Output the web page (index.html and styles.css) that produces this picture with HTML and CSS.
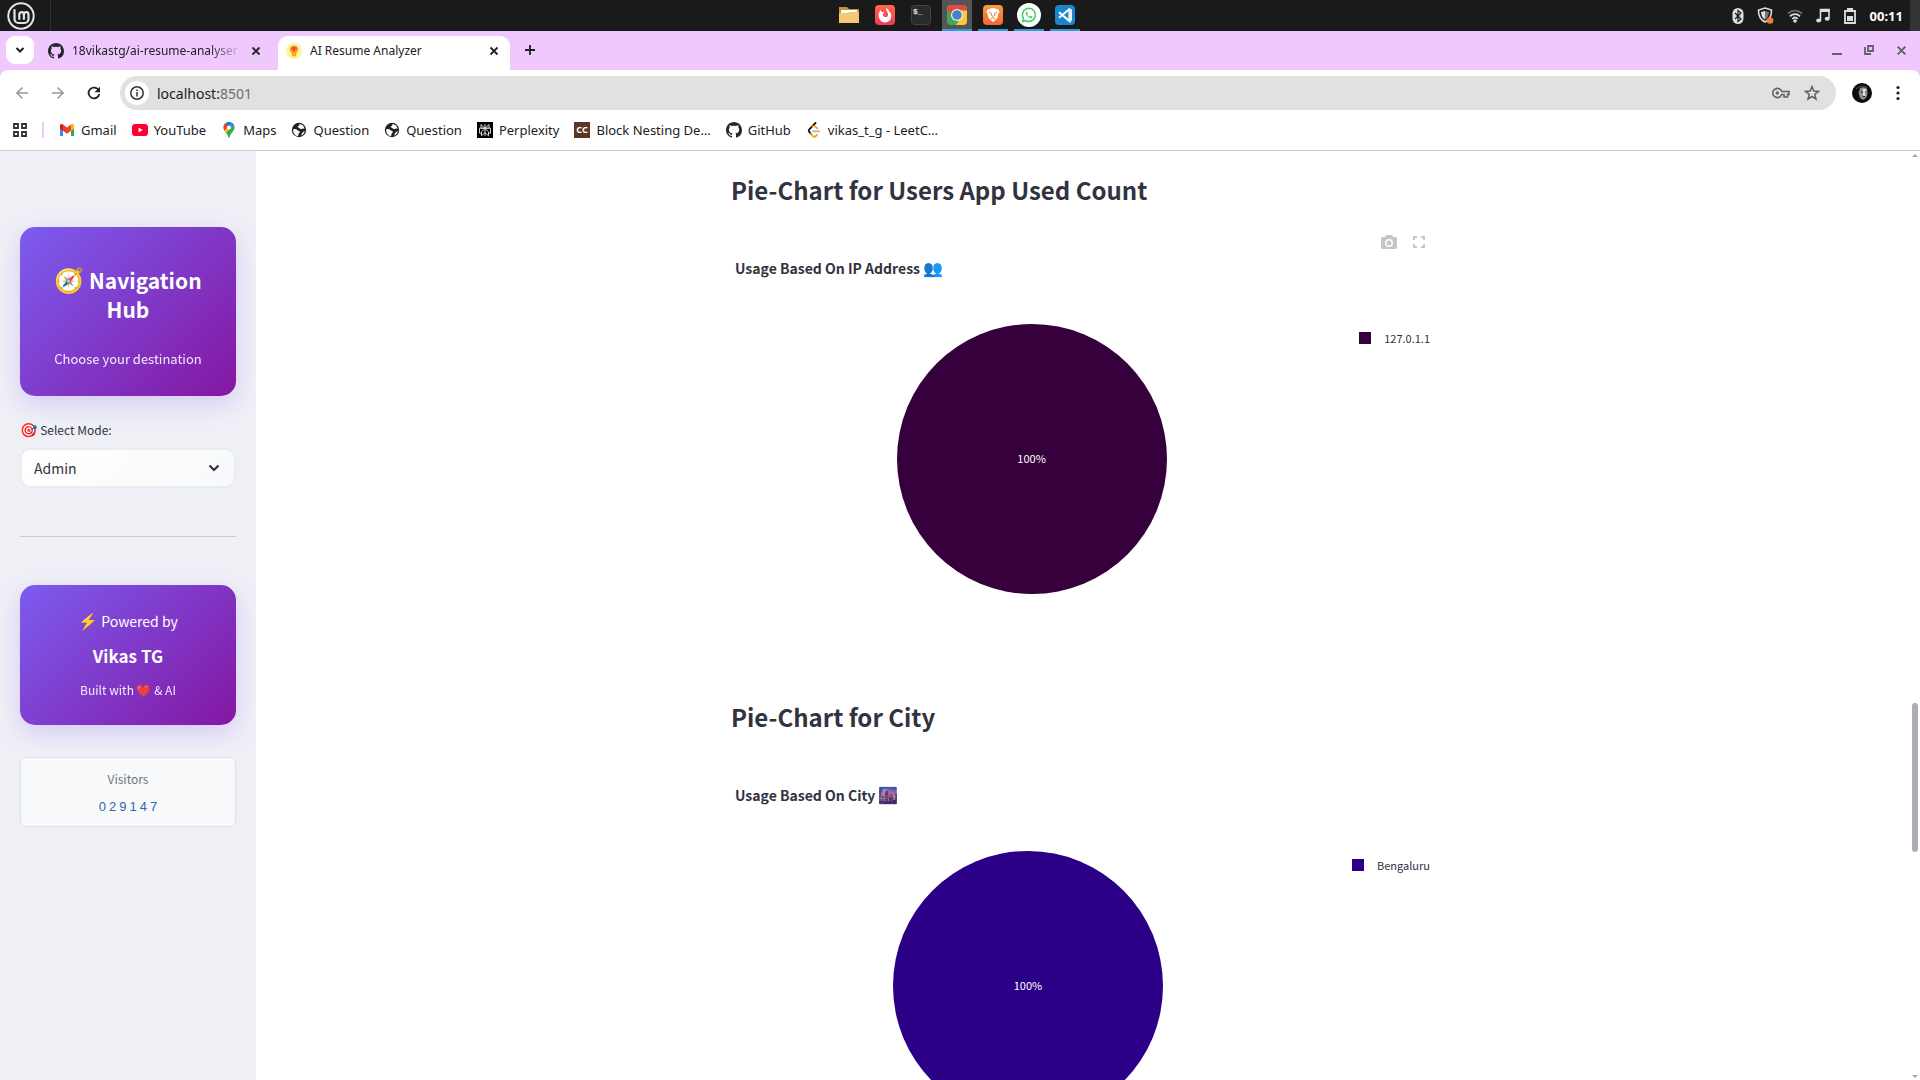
FILE: index.html
```html
<!DOCTYPE html>
<html lang="en">
<head>
<meta charset="utf-8">
<title>AI Resume Analyzer</title>
<link rel="stylesheet" href="styles.css">
</head>
<body>
<svg class="defs" aria-hidden="true">
  <symbol id="github" viewBox="0 0 16 16"><path fill="#24292f" d="M8 0C3.58 0 0 3.58 0 8c0 3.54 2.29 6.53 5.47 7.59.4.07.55-.17.55-.38 0-.19-.01-.82-.01-1.49-2.01.37-2.53-.49-2.69-.94-.09-.23-.48-.94-.82-1.13-.28-.15-.68-.52-.01-.53.63-.01 1.08.58 1.23.82.72 1.21 1.87.87 2.33.66.07-.52.28-.87.51-1.07-1.78-.2-3.64-.89-3.64-3.95 0-.87.31-1.59.82-2.15-.08-.2-.36-1.02.08-2.12 0 0 .67-.21 2.2.82.64-.18 1.32-.27 2-.27s1.36.09 2 .27c1.53-1.04 2.2-.82 2.2-.82.44 1.1.16 1.92.08 2.12.51.56.82 1.27.82 2.15 0 3.07-1.87 3.75-3.65 3.95.29.25.54.73.54 1.48 0 1.07-.01 1.93-.01 2.2 0 .21.15.46.55.38A8.01 8.01 0 0 0 16 8c0-4.42-3.58-8-8-8z"/></symbol>
  <symbol id="close" viewBox="0 0 10 10"><path d="M1.5 1.5l7 7M8.5 1.5l-7 7" stroke="currentColor" stroke-width="1.8"/></symbol>
  <symbol id="globe" viewBox="0 0 16 16"><circle cx="8" cy="8" r="7.2" fill="#202124"/><path fill="#fff" d="M2.3 7.2c1.8-.4 3.3.1 4.4 1 .9.8 2 .6 2.1 1.6.1 1-1 1.300-1.300 2.200-.2.8-.1 1.700-.6 2.300A6 6 0 0 1 2.300 7.200zM8.300 2c.300 1.200-.2 2-1.300 2.300-.6.2-.4 1.100.300 1.200 1 .2 1.200 1.200 2.200 1.400 1.500.2 2.300-.7 4.100-.4A6.100 6.100 0 0 0 8.300 2zM13.900 9.200c-.7 2.200-1.900 3.600-3.600 4.300.2-1.600.7-2.600 1.600-3.300.6-.5 1.200-.9 2-1z"/></symbol>
</svg>

<header class="panel">
  <button class="mint" aria-label="Menu"><svg width="28" height="28" viewBox="0 0 28 28"><g fill="none" stroke="#e4e4e4"><circle cx="14" cy="14" r="12.700" stroke-width="2"/><path stroke-width="2.200" stroke-linecap="round" d="M7.500 8v9a4 4 0 0 0 4 4h6a4 4 0 0 0 4-4v-4.500a2.300 2.300 0 0 0-4.600 0V17M16.900 12.500a2.300 2.300 0 0 0-4.600 0V17"/></g></svg></button>
  <nav class="apps">
    <button class="app" aria-label="Files"><svg width="20" height="20" viewBox="0 0 20 20"><path fill="#c98f35" d="M0 2h8l2 2h10v6H0z"/><path fill="#fff" d="M2 5h16v5H2z"/><path fill="#f7c873" d="M0 8h8l2-1h10v11H0z"/></svg></button>
    <button class="app" aria-label="Firefox"><svg width="20" height="20" viewBox="0 0 20 20"><defs><linearGradient id="ff" x2="0" y2="1"><stop stop-color="#ff6b45"/><stop offset="1" stop-color="#f5365c"/></linearGradient></defs><rect width="20" height="20" rx="4" fill="url(#ff)"/><path fill="#fff" d="M11 3c2 .8 2.800 2 3 3.300 1.600 1.400 2.500 3 2.300 5A6.300 6.300 0 0 1 3.700 11c-.1-2.500.8-4 1.600-6l1.500 2h2.500c-.2 1-1.300 1.300-1.500 2.300.2 2 1.200 3 2.700 3 1.800 0 2.800-1.300 2.600-3C12.900 7.500 11 6 11 3z"/></svg></button>
    <button class="app" aria-label="Terminal"><svg width="20" height="20" viewBox="0 0 20 20"><rect x=".5" y=".5" width="19" height="19" rx="3" fill="#2b2b2b" stroke="#454545"/><text x="2" y="9" font-family="Liberation Mono, monospace" font-weight="700" font-size="8" fill="#e8e8e8">$_</text></svg></button>
    <button class="app running active" aria-label="Chrome"><svg width="20" height="20" viewBox="0 0 20 20"><clipPath id="cc"><rect width="20" height="20" rx="4"/></clipPath><g clip-path="url(#cc)"><path fill="#47a559" d="M0 0h20v20H0z"/><path fill="#e04a3f" d="M0 0h20v7H10L5.500 12 0 3z"/><path fill="#fbc934" d="M10 5.500h10V20H9l5-8z"/></g><circle cx="10" cy="10" r="6" fill="#f1f1f1"/><circle cx="10" cy="10" r="4.800" fill="#4683c4"/></svg></button>
    <button class="app running" aria-label="Brave"><svg width="20" height="20" viewBox="0 0 20 20"><defs><linearGradient id="br" x2="0" y2="1"><stop stop-color="#ff9c35"/><stop offset="1" stop-color="#f4653a"/></linearGradient></defs><rect width="20" height="20" rx="4" fill="url(#br)"/><path fill="#fff" d="M6.500 4l1.500-.8h4l1.500.8 2 .4 1 2.600-1 1.500-1 4.500-1.500 1.500L10 17l-3-2.500L5.500 13l-1-4.500-1-1.500 1-2.600z"/><path stroke="#f5813a" fill="none" d="M6 7.500l2.500.7L8 10l2 1.500L12 10l-.5-1.800 2.500-.7M7.500 14L10 12.700l2.500 1.300"/></svg></button>
    <button class="app running" aria-label="WhatsApp"><svg width="24" height="24" viewBox="0 0 24 24"><circle cx="12" cy="12" r="12" fill="#fff"/><path fill="#3ccf63" d="M12 4.600a7.300 7.300 0 0 0-6.300 11L4.700 19.400l3.900-1A7.300 7.300 0 1 0 12 4.600zm0 1.500a5.800 5.800 0 1 1-3.200 10.700l-2 .5.600-1.900A5.800 5.800 0 0 1 12 6.100z"/><path fill="#3ccf63" d="M9.600 8.500c-.9.5-1.200 1.400-.7 2.500.9 2.100 2.400 3.500 4.500 4.200 1 .3 2-.2 2.300-1.400l-2-1-.9.900c-1.300-.5-2.100-1.300-2.700-2.500l.7-.8z"/></svg></button>
    <button class="app running" aria-label="Visual Studio Code"><svg width="20" height="20" viewBox="0 0 20 20"><rect width="20" height="20" rx="4" fill="#1a86d0"/><path d="M14.500 4v12L4 7.200M14.500 4L4 12.800" fill="none" stroke="#fff" stroke-width="2"/><path d="M14 3l3 1.500v11L14 17z" fill="#e6f3fb"/></svg></button>
  </nav>
  <div class="tray">
    <svg width="12" height="16" viewBox="0 0 12 16"><rect x=".5" width="11" height="16" rx="5.500" fill="#dedede"/><path d="M3 5l6 6-3 2.500v-11L9 5l-6 6" fill="none" stroke="#1a1a1a" stroke-width="1.200"/></svg>
    <svg width="17" height="17" viewBox="0 0 17 17"><path d="M8 1l6.500 2c.2 5.500-1.500 9.500-6.500 12C3 12.500 1.300 8.500 1.500 3z" fill="none" stroke="#dedede" stroke-width="1.600"/><path d="M8 4v8.500C5.500 11 4.200 8.500 4 5z" fill="#dedede"/><path d="M8 4v8.500C10.500 11 11.800 8.500 12 5z" fill="#777"/><circle cx="13" cy="13.500" r="3.300" fill="#f47b3a"/></svg>
    <svg width="16" height="14" viewBox="0 0 16 14"><g fill="none" stroke-width="1.800"><path stroke="#666" d="M1 4.500a10 10 0 0 1 14 0"/><path stroke="#dedede" d="M3 7.300a7 7 0 0 1 10 0M5.300 9.800a4 4 0 0 1 5.400 0"/></g><circle cx="8" cy="12" r="1.800" fill="#dedede"/></svg>
    <svg width="14" height="15" viewBox="0 0 14 15"><path d="M4.500 12V1.500H13V10" fill="none" stroke="#dedede" stroke-width="1.600"/><path fill="#dedede" d="M4 1h9.500v3H4z"/><ellipse cx="2.700" cy="12.500" rx="2.500" ry="2" fill="#dedede"/><ellipse cx="11.200" cy="10.800" rx="2.500" ry="2" fill="#dedede"/></svg>
    <svg width="14" height="16" viewBox="-1 0 14 16"><path fill="#dedede" d="M3 0h6v3H3zM3 8h6v5H3z"/><path d="M1 3h10v12H1z" fill="none" stroke="#dedede" stroke-width="1.800"/></svg>
    <time class="clock">00:11</time>
  </div>
  <span class="panel-end"></span>
</header>

<div class="tabs">
  <button class="tab-search" aria-label="Search tabs"><svg width="10" height="10" viewBox="0 0 10 10"><path d="M1.500 3L5 6.500 8.500 3" fill="none" stroke="#202124" stroke-width="2"/></svg></button>
  <div class="tab"><svg class="i16"><use href="#github"/></svg><span class="tab-title faded">18vikastg/ai-resume-analyser</span><button aria-label="Close tab"><svg width="10" height="10"><use href="#close"/></svg></button></div>
  <div class="tab current"><svg class="i16" viewBox="0 0 16 16"><circle cx="8" cy="8" r="8" fill="#fdf6a0"/><path fill="#fbab25" d="M8 2.500c2.700 0 4.300 1.800 4.300 4 0 1.800-1.300 2.800-2.100 4.500v2.500H5.800V11C5 9.300 3.700 8.300 3.700 6.500c0-2.200 1.600-4 4.300-4z"/><path fill="#f0592b" d="M8 3.500c2 0 3.300 1.200 3.300 3H9.500L9 9H7l-.5-2.500H4.700c0-1.800 1.300-3 3.300-3z"/></svg><span class="tab-title">AI Resume Analyzer</span><button aria-label="Close tab"><svg width="10" height="10"><use href="#close"/></svg></button></div>
  <button class="new-tab" aria-label="New tab"><svg width="12" height="12" viewBox="0 0 12 12"><path d="M6 1v10M1 6h10" stroke="#202124" stroke-width="1.800"/></svg></button>
  <div class="window-buttons">
    <button aria-label="Minimize"><svg width="10" height="10" viewBox="0 0 10 10"><path fill="#5f6368" d="M0 8h10v2H0z"/></svg></button>
    <button aria-label="Restore"><svg width="10" height="10" viewBox="0 0 10 10"><path d="M4 1h5v5H4zM1 2v7h6" fill="none" stroke="#5f6368" stroke-width="1.800"/></svg></button>
    <button aria-label="Close"><svg width="11" height="11"><use href="#close"/></svg></button>
  </div>
</div>

<div class="toolbar-frame">
<div class="toolbar">
  <button aria-label="Back" class="dim"><svg width="14" height="14" viewBox="0 0 14 14"><path d="M7.500 1.500L2 7l5.500 5.500M2 7h11" fill="none" stroke="currentColor" stroke-width="1.600"/></svg></button>
  <button aria-label="Forward" class="dim"><svg width="14" height="14" viewBox="0 0 14 14"><path d="M6.500 1.500L12 7l-5.500 5.500M12 7H1" fill="none" stroke="currentColor" stroke-width="1.600"/></svg></button>
  <button aria-label="Reload"><svg width="14" height="14" viewBox="0 0 14 14"><path d="M11.800 4.500A5.400 5.400 0 1 0 12.300 8" fill="none" stroke="currentColor" stroke-width="1.800"/><path d="M13 .8v5.400H7.600z" fill="currentColor"/></svg></button>
  <div class="omnibox">
    <button class="info" aria-label="Site information"><svg width="14" height="14" viewBox="0 0 14 14"><circle cx="7" cy="7" r="6.200" fill="none" stroke="#303134" stroke-width="1.500"/><path d="M7 6v4.500M7 3.500V5" stroke="#303134" stroke-width="1.500"/></svg></button>
    <a class="url" href="http://localhost:8501">localhost:<span>8501</span></a>
    <button aria-label="Passwords"><svg width="18" height="12" viewBox="0 0 18 12"><path d="M9.700 4.500A4.600 4.600 0 1 0 9.700 7.500H12V10h3.500V7.500H17v-3z" fill="none" stroke="#5f6368" stroke-width="1.600"/><circle cx="5.300" cy="6" r="1.700" fill="#5f6368"/></svg></button>
    <button aria-label="Bookmark"><svg width="16" height="16" viewBox="0 0 16 16"><path d="M8 1.600l1.800 4.500 4.700.3-3.700 3 1.200 4.600L8 11.500 4 14l1.200-4.600-3.700-3 4.700-.3z" fill="none" stroke="#5f6368" stroke-width="1.500"/></svg></button>
  </div>
  <button aria-label="Profile"><svg width="20" height="20" viewBox="0 0 20 20"><circle cx="10" cy="10" r="10" fill="#0b0b0b"/><path d="M4 6c3-3 8-4 11-1" stroke="#555" fill="none"/><path fill="#8c8c8c" d="M8 5c2.500-1.500 6-1 7 1l.5 5-1.500 4-3 2-3-2-1.500-5z"/><path fill="#dcdcdc" d="M11 5.500l3.500 1 .5 3-2 .5.700 3-2 .5-1.200-3z"/><path d="M9 9l2 .4M13 9l1.600-.2M11 13.500l2 .2M6 13c0 2 1 3 3 4" stroke="#171717" fill="none"/></svg></button>
  <button class="more" aria-label="More"><svg width="4" height="16" viewBox="0 0 4 16"><g fill="#202124"><circle cx="2" cy="2.500" r="1.600"/><circle cx="2" cy="8" r="1.600"/><circle cx="2" cy="13.500" r="1.600"/></g></svg></button>
</div>
</div>

<nav class="bookmarks">
  <button class="grid-button" aria-label="Tab groups"><svg width="14" height="14" viewBox="0 0 14 14"><path d="M1 1h4v4H1zM9 1h4v4H9zM1 9h4v4H1zM9 9h4v4H9z" fill="none" stroke="#303134" stroke-width="1.800"/></svg></button>
  <a href="#gmail"><svg class="i16" viewBox="0 0 16 16"><path fill="#4285f4" d="M1 4v10h3V7z"/><path fill="#34a853" d="M15 4v10h-3V7z"/><path fill="#fbbc04" d="M12 4l3-1v3.500l-3 2.300z"/><path fill="#c5221f" d="M1 3.500C1 2 3 1.500 4 2.500V8.800L1 6.500z"/><path fill="#ea4335" d="M4 2.500l4 3 4-3v6.300l-4 3-4-3z"/><path fill="#fbbc04" d="M12 8.800V2.500c1.300-1 3-.4 3 1v3z"/></svg>Gmail</a>
  <a href="#youtube"><svg class="i16" viewBox="0 0 16 16"><rect y="2" width="16" height="12" rx="3" fill="#f03"/><path fill="#fff" d="M6.500 5.500v5L10.700 8z"/></svg>YouTube</a>
  <a href="#maps"><svg class="i16" viewBox="0 0 16 16"><clipPath id="pin"><path d="M8 0a5.500 5.500 0 0 1 5.500 5.500C13.500 9 9.300 11 8.600 15.500h-1.200C6.700 11 2.500 9 2.500 5.500A5.500 5.500 0 0 1 8 0z"/></clipPath><g clip-path="url(#pin)"><path fill="#34a853" d="M0 0h16v16H0z"/><path fill="#4285f4" d="M7 0h9v4L8 6z"/><path fill="#1a73e8" d="M6 0l4 0-2 4-4-2z"/><path fill="#ea4335" d="M0 0l4.200 1.500L8 5 3 9H0z"/><path fill="#fbbc04" d="M3 9l5-5 1 3-5 5z"/></g><circle cx="8" cy="5.500" r="2" fill="#fff"/></svg>Maps</a>
  <a href="#question-1"><svg class="i16"><use href="#globe"/></svg>Question</a>
  <a href="#question-2"><svg class="i16"><use href="#globe"/></svg>Question</a>
  <a href="#perplexity"><svg class="i16" viewBox="0 0 16 16"><path d="M0 0h16v16H0z"/><path d="M8 2v12M4 2.500l4 3.700 4-3.700v3.700H4zM2.500 6.200h11v5H11.500M2.500 6.200v5h2M8 6.500l-3.500 3.300v4L8 10.500l3.500 3.300v-4z" fill="none" stroke="#e8e8e8" stroke-width=".9"/></svg>Perplexity</a>
  <a href="#codechef"><svg class="i16" viewBox="0 0 16 16"><path fill="#5b3620" d="M0 0h16v16H0z"/><text x="8" y="11" text-anchor="middle" font-family="Noto Sans, sans-serif" font-weight="700" font-size="9" fill="#fff">CC</text></svg>Block Nesting De…</a>
  <a href="#github-home"><svg class="i16"><use href="#github"/></svg>GitHub</a>
  <a href="#leetcode"><svg class="i16" viewBox="0 0 16 16"><g fill="none" stroke-width="1.800" stroke-linecap="round"><path stroke="#111" d="M9.500 1L3.300 7.300c-.8.8-.8 1.800 0 2.600L5 12"/><path stroke="#ffa116" d="M5 12l2 2.200c.8.8 1.900.8 2.700 0l1.300-1.300M6.500 4.700c.8-.6 2-.8 2.900 0l1.900 1.700"/><path stroke="#b3b3b3" d="M7 9.300h6"/></g></svg>vikas_t_g - LeetC…</a>
</nav>

<div class="page">
  <aside class="sidebar">
    <section class="card hub">
      <h2><span class="emoji">🧭</span> Navigation Hub</h2>
      <p>Choose your destination</p>
    </section>
    <div class="field">
      <label for="mode"><span class="emoji">🎯</span> Select Mode:</label>
      <div class="select">
        <select id="mode"><option>Admin</option><option>User</option></select>
        <svg width="12" height="8" viewBox="0 0 12 8"><path d="M1.500 1.500L6 6l4.500-4.500" fill="none" stroke="#31333f" stroke-width="2.200"/></svg>
      </div>
    </div>
    <hr>
    <section class="card powered">
      <p class="by"><span class="emoji">⚡</span> Powered by</p>
      <p class="name">Vikas TG</p>
      <p class="built">Built with ❤️ &amp; AI</p>
    </section>
    <section class="visitors">
      <p>Visitors</p>
      <div class="digits"><span>0</span><span>2</span><span>9</span><span>1</span><span>4</span><span>7</span></div>
    </section>
  </aside>
  <main class="content">
    <section class="report">
      <h2>Pie-Chart for Users App Used Count</h2>
      <figure class="chart">
        <div class="modebar">
          <button aria-label="Download plot as PNG"><svg width="16" height="14" viewBox="0 0 16 14"><path fill="#c6c6c6" fill-rule="evenodd" d="M5 0h6l1 2h2.500A1.500 1.500 0 0 1 16 3.500v9a1.500 1.500 0 0 1-1.500 1.500h-13A1.500 1.500 0 0 1 0 12.500v-9A1.500 1.500 0 0 1 1.500 2H4zM8 4a4 4 0 1 0 0 8 4 4 0 0 0 0-8zm0 1.500a2.500 2.500 0 1 1 0 5 2.500 2.500 0 0 1 0-5z"/></svg></button>
          <button aria-label="Fullscreen"><svg width="12" height="12" viewBox="0 0 12 12"><path d="M1 4V1h3M8 1h3v3M11 8v3H8M4 11H1V8" fill="none" stroke="#c6c6c6" stroke-width="2"/></svg></button>
        </div>
        <figcaption>Usage Based On IP Address <span class="emoji">👥</span></figcaption>
        <div class="plot">
          <div class="pie-area"><div class="pie ip">100%</div></div>
          <div class="legend"><span class="swatch ip"></span>127.0.1.1</div>
        </div>
      </figure>
    </section>
    <section class="report">
      <h2>Pie-Chart for City</h2>
      <figure class="chart">
        <div class="modebar"></div>
        <figcaption>Usage Based On City <span class="emoji">🌆</span></figcaption>
        <div class="plot">
          <div class="pie-area"><div class="pie city">100%</div></div>
          <div class="legend"><span class="swatch city"></span>Bengaluru</div>
        </div>
      </figure>
    </section>
  </main>
  <div class="scrollbar">
    <svg width="8" height="4" viewBox="0 0 8 4"><path fill="#a3a3aa" d="M4 0l3 3H1z"/></svg>
    <span class="thumb"></span>
    <svg width="8" height="4" viewBox="0 0 8 4"><path fill="#a3a3aa" d="M4 4L1 1h6z"/></svg>
  </div>
</div>
</body>
</html>
```
FILE: styles.css
```css
* { box-sizing: border-box; }

body {
  margin: 0;
  height: 100vh;
  display: flex;
  flex-direction: column;
  overflow: hidden;
  background: #fff;
  color: #31333f;
  font-family: "Noto Sans CJK SC", "Noto Sans", "Noto Color Emoji", sans-serif;
}

button {
  padding: 0;
  border: 0;
  background: none;
  color: inherit;
  font: inherit;
  display: flex;
  align-items: center;
  justify-content: center;
}

svg { display: block; flex: none; }
h2, p, figure, hr { margin: 0; }
a { color: inherit; text-decoration: none; }
.defs { position: absolute; width: 0; height: 0; }
.i16 { width: 16px; height: 16px; }
.emoji { font-size: 16px; line-height: 1; }

/* Desktop panel */
.panel {
  flex: none;
  height: 31px;
  display: grid;
  grid-template-columns: 1fr auto 1fr 10px;
  background: #1a1a1a;
  color: #fff;
}
.mint {
  width: 51px;
  padding-right: 8px;
  border-right: 1px solid #303030;
}
.apps { display: flex; gap: 6px; padding-left: 4px; }
.app { width: 30px; border-bottom: 2px solid transparent; }
.app.running { border-color: #2a9fd6; }
.app.active { background: #555; }
.tray {
  display: flex;
  align-items: center;
  justify-content: flex-end;
  gap: 13px;
  padding-right: 7px;
}
.clock { font: 700 13px/30px "Noto Sans", sans-serif; }
.panel-end { background: #333; }

/* Browser tabs */
.tabs, .toolbar, .bookmarks {
  flex: none;
  display: flex;
  font-family: "Noto Sans", sans-serif;
  font-size: 13px;
  color: #202124;
}
.tabs {
  height: 39px;
  padding: 5px 13px 0 6px;
  background: #efc8fd;
}
.tab-search {
  width: 28px;
  height: 28px;
  border-radius: 9px;
  background: #fff;
}
.tab {
  width: 244px;
  display: flex;
  align-items: center;
  gap: 8px;
  padding: 0 17px 5px 14px;
  font-size: 12px;
}
.tab.current {
  width: 232px;
  padding: 0 11px 5px 8px;
  background: #fff;
  border-radius: 10px 10px 0 0;
}
.tab-title { flex: 1; min-width: 0; overflow: hidden; white-space: nowrap; }
.faded { -webkit-mask-image: linear-gradient(to right, #000 80%, transparent); mask-image: linear-gradient(to right, #000 80%, transparent); }
.new-tab { width: 40px; height: 28px; }
.window-buttons { margin-left: auto; display: flex; gap: 22px; height: 28px; color: #5f6368; }

/* Address bar */
.toolbar-frame { flex: none; background: #efc8fd; }
.toolbar {
  height: 46px;
  align-items: center;
  padding: 0 20px 0 15px;
  gap: 22px;
  border-radius: 8px 8px 0 0;
  background: #fff;
}
.dim { color: #9a9a9a; }
.more { margin-left: 2px; }
.omnibox {
  flex: 1;
  height: 34px;
  margin-left: -3px;
  margin-right: -6px;
  padding: 0 16px 0 5px;
  display: flex;
  align-items: center;
  gap: 14px;
  border-radius: 17px;
  background: #e1e1e1;
}
.info { width: 24px; height: 24px; border-radius: 50%; background: #fff; }
.url { flex: 1; margin-left: -6px; font-size: 14px; }
.url span { color: #6b6f74; }

/* Bookmarks bar */
.bookmarks {
  height: 35px;
  align-items: center;
  gap: 15px;
  padding: 0 12px 6px 13px;
  border-bottom: 1px solid #ccc;
}
.bookmarks a { display: flex; align-items: center; gap: 6px; white-space: nowrap; }
.grid-button { padding-right: 15px; border-right: 2px solid #efc8fd; height: 16px; }

/* Page */
.page { flex: 1; min-height: 0; display: flex; }
.sidebar {
  width: 256px;
  padding: 76px 20px 0;
  background: #eff0f6;
}
.card {
  border-radius: 15px;
  background: linear-gradient(135deg, #7c5cf0 0%, #8417a2 100%);
  box-shadow: 0 8px 24px rgba(118, 75, 240, .22);
  color: #fff;
  text-align: center;
}
.hub { padding: 39px 24px 26px; }
.hub h2 { font-size: 21px; line-height: 29px; font-weight: 700; }
.hub h2 .emoji { font-size: 24px; }
.hub p { margin-top: 24px; font-size: 13px; line-height: 22px; opacity: .9; white-space: nowrap; }
.field { margin-top: 22px; }
.field label { display: block; font-size: 12px; line-height: 24px; }
.field .emoji { font-size: 14px; }
.select { display: grid; margin-top: 6px; align-items: center; }
.select > * { grid-area: 1 / 1; }
.select select {
  appearance: none;
  width: 100%;
  height: 40px;
  padding: 0 12px 1px;
  border: 2px solid #e9ecef;
  border-radius: 10px;
  background: linear-gradient(135deg, #fff, #f8f9fa);
  color: inherit;
  font: 14px "Noto Sans CJK SC", sans-serif;
}
.select svg { justify-self: end; margin-right: 16px; pointer-events: none; }
.sidebar hr { margin: 48px 0; border: 0; border-top: 1px solid #c9cbd3; }
.powered { padding: 23px 16px; }
.by { font-size: 14px; line-height: 26px; }
.name { margin-top: 8px; font-size: 17px; line-height: 28px; font-weight: 700; }
.built { margin-top: 8px; font-size: 12px; line-height: 24px; opacity: .9; }
.visitors {
  margin-top: 32px;
  padding: 9px 10px 7px;
  border: 1px solid #dee2e6;
  border-radius: 5px;
  background: #f8f9fb;
  text-align: center;
}
.visitors p { font-size: 12px; line-height: 24px; color: #6c757d; }
.digits {
  display: flex;
  justify-content: center;
  gap: 3px;
  padding-top: 4px;
  font: 13px/24px "Liberation Sans", sans-serif;
  color: #3466a5;
}

.content { flex: 1; overflow: hidden; padding: 11px 0 0; }
.report { width: 704px; margin: 0 auto; padding-bottom: 15px; }
.report h2 { height: 62px; padding-top: 11px; font-size: 24px; line-height: 34px; font-weight: 700; }
.chart { height: 450px; }
.modebar { height: 32px; display: flex; gap: 16px; padding: 11px 10px 0 0; justify-content: flex-end; align-items: flex-start; }
.modebar button { height: 14px; }
.chart figcaption { height: 68px; padding-left: 4px; font-size: 14px; line-height: 24px; font-weight: 700; }
.plot { display: flex; gap: 107px; padding: 0 5px 0 80px; }
.pie-area { flex: 1; display: flex; justify-content: center; }
.pie {
  width: 270px;
  height: 270px;
  padding-bottom: 2px;
  border-radius: 50%;
  display: flex;
  align-items: center;
  justify-content: center;
  color: #fff;
  font-size: 11px;
}
.ip { background: #36003c; }
.city { background: #2b0087; }
.legend { display: flex; align-items: center; gap: 13px; height: 28px; font-size: 11px; }
.swatch { width: 12px; height: 12px; }

.scrollbar {
  width: 10px;
  display: flex;
  flex-direction: column;
  align-items: center;
  padding: 3px 0 2px;
}
.thumb { width: 6px; height: 149px; margin: 545px 0 auto; border-radius: 3px; background: #adadb3; }
```
